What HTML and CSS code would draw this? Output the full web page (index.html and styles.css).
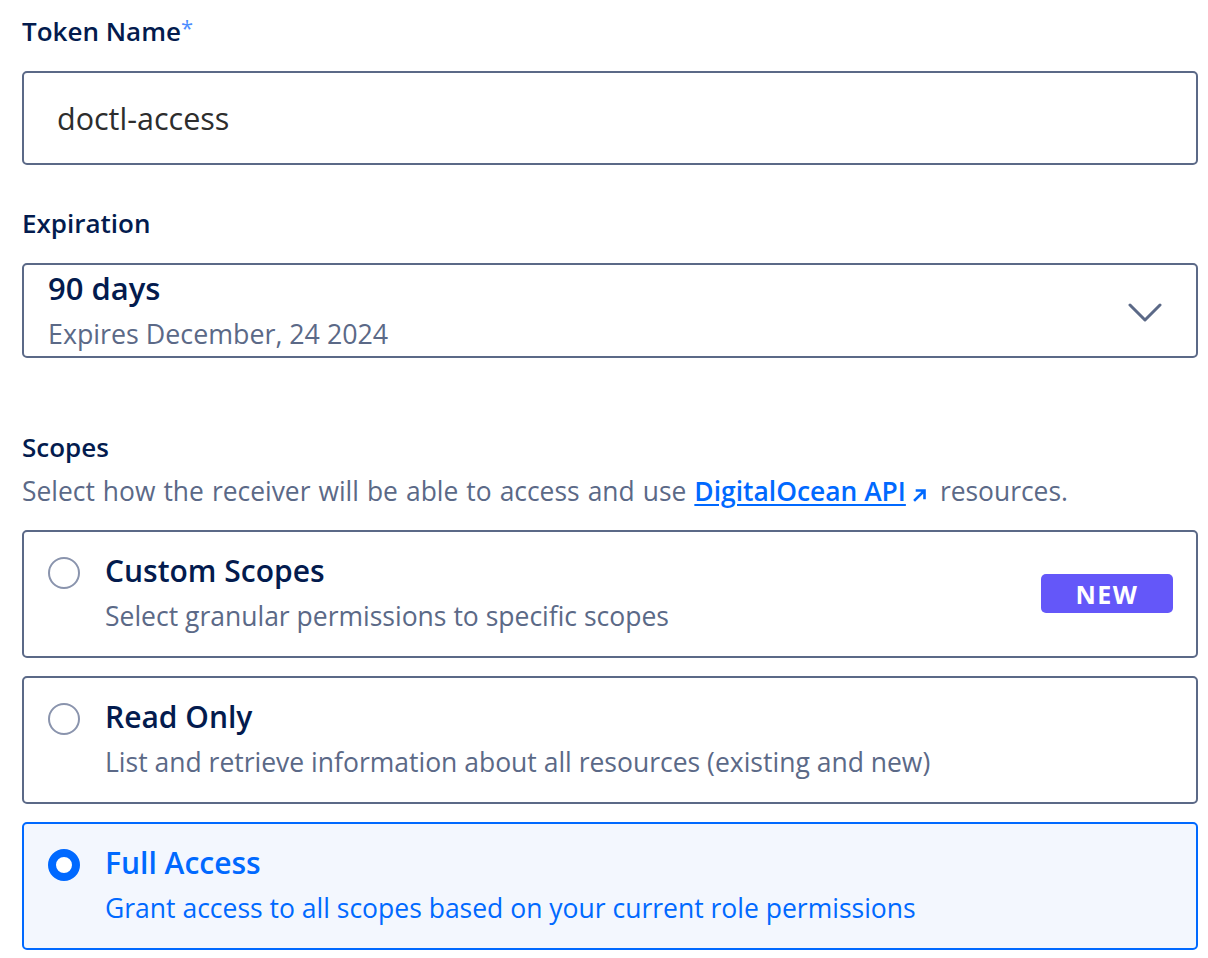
FILE: index.html
```html
<!DOCTYPE html>
<html>
<head>
<meta charset="utf-8">
<link rel="stylesheet" href="styles.css">
</head>
<body>
<div class="form">
  <div class="field">
    <div class="label">Token Name<span class="req">*</span></div>
    <div class="input">doctl-access</div>
  </div>
  <div class="field">
    <div class="label">Expiration</div>
    <div class="select">
      <div class="select-text">
        <div class="sel-main">90 days</div>
        <div class="sel-sub">Expires December, 24 2024</div>
      </div>
      <svg class="chevron" width="34" height="22" viewBox="0 0 34 22"><path d="M2 3 L17 18 L32 3" fill="none" stroke="#5b6987" stroke-width="3" stroke-linecap="round" stroke-linejoin="round"/></svg>
    </div>
  </div>
  <div class="field scopes">
    <div class="label">Scopes</div>
    <p class="desc">Select how the receiver will be able to access and use <a class="link" href="#">DigitalOcean API</a><svg class="ext" width="14" height="14" viewBox="0 0 14 14"><path d="M2 12 L10.5 3.5 M4 2.5 H11.5 V10" fill="none" stroke="#0069ff" stroke-width="2.6" stroke-linecap="square"/></svg> resources.</p>
    <div class="options">
      <div class="option">
        <span class="radio"></span>
        <div class="opt-body">
          <div class="opt-title">Custom Scopes</div>
          <div class="opt-sub">Select granular permissions to specific scopes</div>
        </div>
        <span class="badge">NEW</span>
      </div>
      <div class="option">
        <span class="radio"></span>
        <div class="opt-body">
          <div class="opt-title">Read Only</div>
          <div class="opt-sub">List and retrieve information about all resources (existing and new)</div>
        </div>
      </div>
      <div class="option selected">
        <span class="radio"></span>
        <div class="opt-body">
          <div class="opt-title">Full Access</div>
          <div class="opt-sub">Grant access to all scopes based on your current role permissions</div>
        </div>
      </div>
    </div>
  </div>
</div>
</body>
</html>
```

FILE: styles.css
```css
* { box-sizing: border-box; }
body {
  margin: 0;
  background: #ffffff;
  font-family: "Open Sans", "Lato", sans-serif;
  color: #031b4e;
}
.form {
  padding: 13px 10px 0 22px;
  width: 1208px;
}
.field { margin-bottom: 40px; }
.label {
  font-size: 26px;
  font-weight: 600;
  line-height: 36px;
  color: #031b4e;
  margin-bottom: 22px;
}
.req { color: #4c8dff; font-weight: 400; font-size: 22px; vertical-align: top; line-height: 28px; }
.input {
  height: 94px;
  border: 2px solid #5b6987;
  border-radius: 5px;
  padding-left: 33px;
  display: flex;
  align-items: center;
  font-size: 30.5px;
  color: #2d2d2d;
}
.select {
  height: 95px;
  border: 2px solid #5b6987;
  border-radius: 5px;
  padding: 0 34px 0 24px;
  display: flex;
  align-items: center;
  justify-content: space-between;
}
.select-text { align-self: flex-start; padding-top: 3px; }
.sel-main { font-size: 31px; font-weight: 600; line-height: 40px; color: #031b4e; }
.sel-sub { font-size: 26.8px; line-height: 44px; margin-top: 4px; color: #5b6987; }
.chevron { margin-top: 4px; }
.scopes { margin-top: 71px; }
.scopes .label { margin-bottom: 6px; }
.desc {
  margin: 0 0 19px;
  font-size: 26.4px;
  line-height: 40px;
  word-spacing: 1.2px;
  color: #5b6987;
}
.link { color: #0069ff; font-weight: 600; word-spacing: 0; text-decoration: underline; text-underline-offset: 3px; text-decoration-thickness: 2px; }
.ext { margin: 0 5px 0 7px; vertical-align: -1px; }
.options { display: flex; flex-direction: column; gap: 18px; }
.option {
  height: 128px;
  border: 2px solid #5b6987;
  border-radius: 5px;
  display: flex;
  align-items: flex-start;
  padding: 0 23px 0 24px;
  background: #fff;
}
.radio {
  width: 32px;
  height: 32px;
  border-radius: 50%;
  border: 2px solid #8a94ad;
  flex: none;
  margin-right: 25px;
  margin-top: 25px;
}
.opt-body { flex: 1; padding-top: 17px; }
.opt-title { font-size: 30px; font-weight: 600; line-height: 44px; color: #031b4e; }
.opt-sub { font-size: 26.5px; line-height: 44px; margin-top: 1px; color: #5b6987; }
.badge {
  margin-top: 42px;
  background: #6457f9;
  color: #fff;
  font-weight: 700;
  font-size: 25px;
  letter-spacing: 1.5px;
  width: 132px;
  height: 39px;
  border-radius: 5px;
  display: flex;
  align-items: center;
  justify-content: center;
}
.option.selected {
  background: #f3f7fe;
  border-color: #0069ff;
}
.option.selected .radio {
  border: 8.5px solid #0069ff;
  background: #fff;
}
.option.selected .opt-title, .option.selected .opt-sub { color: #0069ff; }
```
